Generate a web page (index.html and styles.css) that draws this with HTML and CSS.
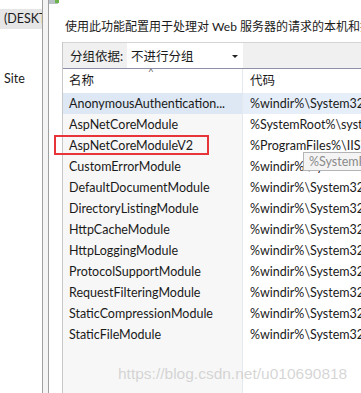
FILE: index.html
```html
<!DOCTYPE html>
<html>

<head>
    <meta charset="utf-8">
    <title>模块</title>
    <link rel="stylesheet" href="styles.css">
</head>

<body>
    <aside class="tree">
        <div class="tree_item selected">(DESKTOP-SERVER)</div>
        <div class="tree_item site">Site</div>
    </aside>
    <div class="splitter"></div>

    <main class="feature">
        <div class="feature_icon">
            <svg width="12" height="6" viewBox="0 0 12 6">
                <rect x="1" y="0" width="9" height="4" fill="#b9c0c6" />
                <rect x="7" y="0" width="4" height="3" fill="#6cb24a" />
            </svg>
        </div>
        <p class="desc">使用此功能配置用于处理对 Web 服务器的请求的本机和托管代码模块。</p>

        <section class="list">
            <div class="group_bar">
                <span class="group_label">分组依据:</span>
                <div class="select">
                    <span>不进行分组</span>
                    <span class="arrow"></span>
                </div>
            </div>

            <div class="row head">
                <div class="col name">名称<span class="sort">^</span></div>
                <div class="col code">代码</div>
            </div>

            <div class="rows">
                <div class="row hover">
                    <div class="col name">AnonymousAuthentication...</div>
                    <div class="col code">%windir%\System32\inetsrv\authanon.dll</div>
                </div>
                <div class="row">
                    <div class="col name">AspNetCoreModule</div>
                    <div class="col code">%SystemRoot%\system32\inetsrv\aspnetcore.dll</div>
                </div>
                <div class="row">
                    <div class="col name open"><span class="marked">AspNetCoreModuleV2</span></div>
                    <div class="col code">%ProgramFiles%\IIS\Asp.Net Core Module\V2\aspnetcorev2.dll</div>
                </div>
                <div class="row">
                    <div class="col name">CustomErrorModule</div>
                    <div class="col code">%windir%\System32\inetsrv\custerr.dll</div>
                </div>
                <div class="row">
                    <div class="col name">DefaultDocumentModule</div>
                    <div class="col code">%windir%\System32\inetsrv\defdoc.dll</div>
                </div>
                <div class="row">
                    <div class="col name">DirectoryListingModule</div>
                    <div class="col code">%windir%\System32\inetsrv\dirlist.dll</div>
                </div>
                <div class="row">
                    <div class="col name">HttpCacheModule</div>
                    <div class="col code">%windir%\System32\inetsrv\cachhttp.dll</div>
                </div>
                <div class="row">
                    <div class="col name">HttpLoggingModule</div>
                    <div class="col code">%windir%\System32\inetsrv\loghttp.dll</div>
                </div>
                <div class="row">
                    <div class="col name">ProtocolSupportModule</div>
                    <div class="col code">%windir%\System32\inetsrv\protsup.dll</div>
                </div>
                <div class="row">
                    <div class="col name">RequestFilteringModule</div>
                    <div class="col code">%windir%\System32\inetsrv\modrqflt.dll</div>
                </div>
                <div class="row">
                    <div class="col name">StaticCompressionModule</div>
                    <div class="col code">%windir%\System32\inetsrv\compstat.dll</div>
                </div>
                <div class="row">
                    <div class="col name">StaticFileModule</div>
                    <div class="col code">%windir%\System32\inetsrv\static.dll</div>
                </div>
                <div class="row filler">
                    <div class="col name"></div>
                    <div class="col code"></div>
                </div>
            </div>

            <div class="tooltip">%SystemRoot%\system32\inetsrv\aspnetcore.dll</div>
        </section>
    </main>

    <div class="watermark">https://blog.csdn.net/u010690818</div>
</body>

</html>
```

FILE: styles.css
```css
/* vars */
:root {
    --ui-font: Lato, "Noto Sans CJK SC", sans-serif;
    --border: #a0a0a0;
    --name-bg: #f7f7f7;
    --hover-bg: #dde8f4;
}

html {
    font-family: var(--ui-font);
    font-size: 12.5px;
    color: #1a1a1a;
}

body {
    margin: 0;
    width: 361px;
    height: 393px;
    overflow: hidden;
    display: flex;
    background: #fff;
    position: relative;
}

/* left tree */
.tree {
    width: 42px;
    flex: none;
    border-right: 1px solid var(--border);
    padding-top: 9px;
    overflow: hidden;
    white-space: nowrap;
}

.tree_item {
    height: 20px;
    line-height: 20px;
    padding-left: 4px;
}

.tree_item.selected {
    background: #e6e6e6;
}

.tree_item.site {
    margin-top: 40px;
}

.splitter {
    width: 5px;
    flex: none;
    background: #f4f4f4;
    border-right: 1px solid var(--border);
}

/* right side */
.feature {
    flex: 1;
    min-width: 0;
    padding-left: 13px;
    overflow: hidden;
}

.feature_icon {
    height: 6px;
    margin-left: -14px;
    line-height: 0;
}

.desc {
    margin: 12px 0 0 3px;
    height: 18px;
    line-height: 18px;
    font-size: 12px;
    white-space: nowrap;
}

.list {
    margin-top: 6px;
    border-left: 1px solid #c8c8c8;
    position: relative;
}

.group_bar {
    height: 25px;
    display: flex;
    align-items: center;
    background: #f0f0f0;
    border-top: 1px solid #d4d4d4;
    border-bottom: 1px solid #8e92a6;
}

.group_label {
    padding-left: 7px;
    width: 57px;
}

.select {
    width: 107px;
    height: 100%;
    background: #fff;
    display: flex;
    align-items: center;
    justify-content: space-between;
    padding: 0 5px 0 4px;
}

.arrow {
    width: 0;
    height: 0;
    border-left: 3px solid transparent;
    border-right: 3px solid transparent;
    border-top: 3px solid #222;
    margin-top: 1px;
}

.row {
    display: flex;
    height: 21px;
    line-height: 21px;
    white-space: nowrap;
}

.col {
    overflow: hidden;
}

.col.name {
    width: 173px;
    flex: none;
    padding-left: 6px;
    background: var(--name-bg);
    border-right: 1px solid #e4e8ef;
}

.col.name.open {
    overflow: visible;
}

.col.code {
    flex: 1;
    padding-left: 7px;
}

.row.head {
    height: 24px;
    line-height: 23px;
}

.row.head .col.name {
    background: #fff;
    position: relative;
    overflow: visible;
}

.sort {
    position: absolute;
    left: 85px;
    top: -9px;
    font-size: 10px;
    color: #666;
}

.row.hover .col {
    background: var(--hover-bg);
}

.row.hover .col.code {
    background: #e5eef9;
}

.row.filler {
    height: 60px;
}

.marked {
    position: relative;
}

.marked::after {
    content: "";
    position: absolute;
    left: -15px;
    right: -16px;
    top: -3px;
    bottom: -2px;
    border: 2px solid #e8353a;
}

.tooltip {
    position: absolute;
    left: 240px;
    top: 110px;
    height: 17px;
    line-height: 17px;
    padding: 0 5px;
    background: #f4f4f4;
    border: 1px solid #b4b4b4;
    color: #8a8a8a;
    white-space: nowrap;
}

.watermark {
    position: absolute;
    left: 118px;
    top: 365px;
    font-family: "Liberation Sans", sans-serif;
    font-size: 15.5px;
    color: rgba(200, 200, 200, 0.75);
    white-space: nowrap;
}
```
